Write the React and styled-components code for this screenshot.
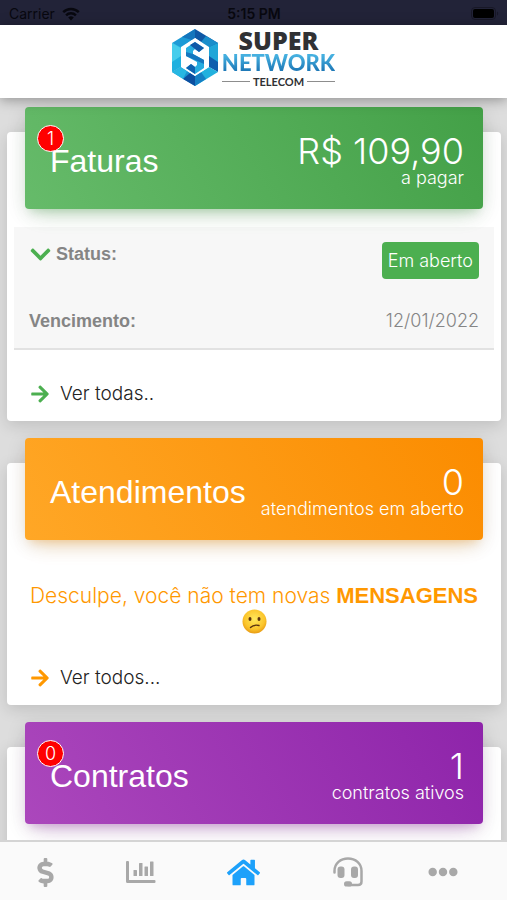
import React from 'react'
import styled, { createGlobalStyle } from 'styled-components'
import { FaArrowRight, FaChevronDown, FaDollarSign, FaEllipsisH, FaHome } from 'react-icons/fa'

const themes = {
  green: { main: '#4caf50', from: '#66bb6a', to: '#43a047', glow: '76, 175, 80' },
  orange: { main: '#ff9800', from: '#ffa726', to: '#fb8c00', glow: '255, 152, 0' },
  purple: { main: '#9c27b0', from: '#ab47bc', to: '#8e24aa', glow: '156, 39, 176' },
}

const GlobalStyle = createGlobalStyle`
  * {
    box-sizing: border-box;
  }

  body {
    margin: 0;
    background: #dddddd;
    color: #222222;
    font-family: 'Liberation Sans', Arial, sans-serif;
    font-size: 18px;
  }
`

const Screen = styled.div`
  display: flex;
  flex-direction: column;
  height: 100vh;
`

const StatusBar = styled.div`
  display: grid;
  grid-template-columns: 1fr auto 1fr;
  align-items: center;
  flex: none;
  height: 25px;
  padding: 2px 8px 0 9px;
  background: #222338;
  color: #08080f;
  font-family: Inter, sans-serif;
  font-size: 14px;
`

const Carrier = styled.span`
  display: flex;
  align-items: center;
  gap: 7px;
`

const Clock = styled.span`
  font-weight: 600;
`

const Battery = styled.svg`
  justify-self: end;
`

const Header = styled.header`
  position: relative;
  z-index: 1;
  display: flex;
  justify-content: center;
  flex: none;
  height: 73px;
  padding-top: 4px;
  background: #ffffff;
  box-shadow: 0 2px 12px rgba(0, 0, 0, 0.35);
`

const Logo = styled.a`
  display: flex;
  gap: 4px;
  text-decoration: none;
`

const LogoWords = styled.span`
  display: flex;
  flex-direction: column;
  align-items: center;
  color: #303134;
  font-family: Lato, sans-serif;
  font-weight: 900;
`

const Super = styled.span`
  font-family: 'Open Sans', sans-serif;
  font-size: 25px;
  font-weight: 800;
  line-height: 22px;
`

const Network = styled.span`
  background: linear-gradient(#45b0e0 20%, #1f7ab8 80%);
  background-clip: text;
  color: transparent;
  font-size: 22px;
  line-height: 24px;
`

const Telecom = styled.span`
  display: flex;
  align-items: center;
  gap: 3px;
  width: 100%;
  font-size: 11px;
  font-weight: 700;
  line-height: 13px;

  &::before,
  &::after {
    content: '';
    flex: 1;
    height: 1px;
    background: #8d8d8d;
  }
`

const Main = styled.main`
  display: flex;
  flex: 1;
  flex-direction: column;
  gap: 42px;
  min-height: 0;
  padding: 34px 6px 40px 7px;
  overflow-y: auto;
  scrollbar-width: none;
`

const Card = styled.section`
  flex: none;
  border-radius: 4px;
  background: #ffffff;
  box-shadow: 0 4px 16px rgba(0, 0, 0, 0.14);
`

const Banner = styled.div`
  position: relative;
  display: flex;
  align-items: center;
  justify-content: space-between;
  height: 102px;
  margin: -25px 18px 0;
  padding: 3px 19px 0 25px;
  border-radius: 4px;
  background: linear-gradient(60deg, ${p => p.$theme.from}, ${p => p.$theme.to});
  box-shadow: 0 12px 20px -10px rgba(${p => p.$theme.glow}, 0.3),
    0 4px 20px rgba(0, 0, 0, 0.12), 0 7px 8px -5px rgba(${p => p.$theme.glow}, 0.2);
  color: #ffffff;
`

const Title = styled.h2`
  margin: 3px 0 0;
  font-size: 32px;
  font-weight: 400;
  line-height: 36px;
`

const Badge = styled.span`
  position: absolute;
  top: 18px;
  left: 12px;
  display: flex;
  align-items: center;
  justify-content: center;
  width: 27px;
  height: 27px;
  border: 1px solid #ffffff;
  border-radius: 50%;
  background: #ff0000;
  font-family: Inter, sans-serif;
  font-size: 18px;
  font-weight: 300;
`

const Summary = styled.div`
  display: flex;
  flex-direction: column;
  align-items: flex-end;
  font-family: Inter, sans-serif;
  font-weight: 300;
`

const Amount = styled.span`
  font-size: 36px;
  line-height: 36px;
`

const Caption = styled.span`
  font-size: 18px;
  line-height: 18px;
`

const Details = styled.dl`
  display: flex;
  flex-direction: column;
  gap: 24px;
  margin: 18px 7px 0;
  padding: 15px 15px 9px;
  border-bottom: 2px solid #e2e2e2;
  background: #f7f7f7;
`

const Row = styled.div`
  display: flex;
  align-items: flex-start;
  justify-content: space-between;
  color: #858585;
  line-height: 36px;
`

const Label = styled.dt`
  display: flex;
  align-items: center;
  gap: 4px;
  font-weight: 700;
  line-height: ${p => (p.$compact ? 24 : 36)}px;
`

const Value = styled.dd`
  margin: 0;
  font-family: Inter, sans-serif;
  font-weight: 300;
`

const Tag = styled.span`
  display: block;
  padding: 0 6px;
  border-radius: 4px;
  background: #4caf50;
  color: #ffffff;
  line-height: 37px;
`

const Message = styled.p`
  margin: 43px 0 0;
  color: #ff9800;
  font-family: Inter, sans-serif;
  font-size: 21px;
  font-weight: 300;
  line-height: 26px;
  text-align: center;
`

const Strong = styled.strong`
  font-family: 'Liberation Sans', Arial, sans-serif;
  font-size: 22px;
  font-weight: 700;
`

const Face = styled.svg`
  display: block;
  margin: 0 auto;
`

const More = styled.a`
  display: flex;
  align-items: center;
  gap: 10px;
  height: 71px;
  padding: 16px 23px 0;
  color: #222222;
  font-family: Inter, sans-serif;
  font-size: 19px;
  font-weight: 300;
  text-decoration: none;

  svg {
    color: ${p => p.$theme.main};
  }
`

const TabBar = styled.nav`
  position: relative;
  display: grid;
  grid-template-columns: 91fr 99fr 107fr 101fr 89fr;
  flex: none;
  height: 60px;
  padding-right: 20px;
  border-top: 2px solid #d4d4d4;
  background: #fafafa;
`

const Tab = styled.button`
  display: flex;
  align-items: center;
  justify-content: center;
  padding: 2px 0 0;
  border: 0;
  background: none;
  color: ${p => (p.$active ? '#1da1fa' : '#a8a8a8')};
`

const WifiIcon = () => (
  <svg width="18" height="14" viewBox="0 0 18 14" fill="none" stroke="currentColor" aria-hidden="true">
    <path d="M1.2 5.2a11 11 0 0 1 15.6 0" strokeWidth="2.4" />
    <path d="M4.1 8.3a7 7 0 0 1 9.8 0" strokeWidth="2.4" />
    <path d="M9 13.4 6.2 10.6a4 4 0 0 1 5.6 0z" fill="currentColor" stroke="none" />
  </svg>
)

const BatteryIcon = () => (
  <Battery width="28" height="13" viewBox="0 0 28 13" aria-hidden="true">
    <rect x="0.5" y="0.5" width="24" height="12" rx="3.5" fill="none" stroke="#181827" />
    <rect x="2" y="2" width="21" height="9" rx="2" fill="#000000" />
    <path d="M26 4.5c1.6.6 1.6 3.4 0 4z" fill="#181827" />
  </Battery>
)

const LogoMark = () => (
  <svg width="46" height="57" viewBox="0 0 46 57" aria-hidden="true">
    <path d="M23 0 0 14l9 5 14-10z" fill="#1c9ad6" />
    <path d="M23 0 10 8l13 4z" fill="#1475bd" />
    <path d="M23 0 46 14l-9 5-14-10z" fill="#0f57a5" />
    <path d="M34 7 46 14l-9 5-8-6z" fill="#1a8ecb" />
    <path d="M0 14v29l9-5V18z" fill="#1fb0df" />
    <path d="M0 14 9 19v8L0 33z" fill="#45cdec" />
    <path d="M46 14v29l-9-5V18z" fill="#0e5eae" />
    <path d="M46 14 37 18v9l9 6z" fill="#20a6d8" />
    <path d="M0 43 23 57V47L9 38z" fill="#1a93d0" />
    <path d="M0 43 9 38l6 4-4 8z" fill="#27b7e2" />
    <path d="M11 50l12 7V47l-5-3z" fill="#0c4fa0" />
    <path d="M46 43 23 57V47l14-9z" fill="#22b1de" />
    <path d="M34 50 23 57V47l6-4z" fill="#1580c4" />
    <path d="M23 9 37 18v20L23 47 9 38V18z" fill="#ffffff" />
    <path d="M23 13 32 19 27 23 23 20 21 22v3l11 6v8l-9 6-9-6 5-4 4 3 2-2v-3l-11-6v-8z" fill="#27ade0" />
    <path d="M23 13 32 19 27 23 23 20 18 16z" fill="#1059a8" />
    <path d="M14 27v-4l7 2 11 6v4z" fill="#1577bf" />
    <path d="M14 39l5-4 4 3v7z" fill="#0f62b0" />
  </svg>
)

const ConfusedFace = () => (
  <Face width="25" height="25" viewBox="0 0 25 25" role="img" aria-label="Rosto confuso">
    <defs>
      <radialGradient id="face" cx="50%" cy="40%" r="60%">
        <stop offset="0" stopColor="#ffe95c" />
        <stop offset="0.7" stopColor="#fbc52c" />
        <stop offset="1" stopColor="#e89b14" />
      </radialGradient>
    </defs>
    <circle cx="12.5" cy="12.5" r="12" fill="url(#face)" />
    <ellipse cx="8" cy="10" rx="1.5" ry="2" fill="#5b3411" />
    <ellipse cx="17" cy="10" rx="1.5" ry="2" fill="#5b3411" />
    <path d="M8.500 18.500c2-2 5-2.800 8.500-2" fill="none" stroke="#5b3411" strokeWidth="1.400" strokeLinecap="round" />
  </Face>
)

const ChartIcon = () => (
  <svg width="30" height="22" viewBox="0 0 30 22" fill="currentColor" aria-hidden="true">
    <path d="M0 1q0-1 1-1h1q1 0 1 1v18h25.500q1 0 1 1v1q0 1-1 1H1.500Q0 22 0 20.500z" />
    <rect x="7.500" y="9" width="3.500" height="6" rx="0.500" />
    <rect x="13" y="2" width="3.500" height="13" rx="0.500" />
    <rect x="18.500" y="5.500" width="3.500" height="9.500" rx="0.500" />
    <rect x="24" y="0.500" width="3.500" height="14.500" rx="0.500" />
  </svg>
)

const HeadsetIcon = () => (
  <svg width="30" height="30" viewBox="0 0 30 30" fill="none" aria-hidden="true">
    <path
      d="M1.500 15.500V14C1.500 6.500 7.500 1.500 15 1.500S28.500 6.500 28.500 14v10.500q0 3.500-3.500 3.500H15"
      stroke="currentColor"
      strokeWidth="2.500"
      strokeLinecap="round"
    />
    <rect x="4.500" y="9.500" width="7" height="11.500" rx="3" fill="currentColor" />
    <rect x="18" y="9.500" width="7" height="11.500" rx="3" fill="currentColor" />
    <rect x="11" y="24.200" width="8" height="5.300" rx="2.600" fill="currentColor" />
  </svg>
)

const InfoCard = ({ theme, title, badge, amount, caption, children }) => (
  <Card>
    <Banner $theme={theme}>
      <Title>{title}</Title>
      {badge !== undefined && <Badge>{badge}</Badge>}
      <Summary>
        <Amount>{amount}</Amount>
        <Caption>{caption}</Caption>
      </Summary>
    </Banner>
    {children}
  </Card>
)

const MoreLink = ({ theme, children }) => (
  <More href="#" $theme={theme}>
    <FaArrowRight size={20} />
    {children}
  </More>
)

const App = () => (
  <Screen>
    <GlobalStyle />
    <StatusBar>
      <Carrier>
        Carrier <WifiIcon />
      </Carrier>
      <Clock>5:15 PM</Clock>
      <BatteryIcon />
    </StatusBar>

    <Header>
      <Logo href="#">
        <LogoMark />
        <LogoWords>
          <Super>SUPER</Super>
          <Network>NETWORK</Network>
          <Telecom>TELECOM</Telecom>
        </LogoWords>
      </Logo>
    </Header>

    <Main>
      <InfoCard theme={themes.green} title="Faturas" badge={1} amount="R$ 109,90" caption="a pagar">
        <Details>
          <Row>
            <Label $compact>
              <FaChevronDown size={23} color={themes.green.main} />
              Status:
            </Label>
            <Value>
              <Tag>Em aberto</Tag>
            </Value>
          </Row>
          <Row>
            <Label>Vencimento:</Label>
            <Value>12/01/2022</Value>
          </Row>
        </Details>
        <MoreLink theme={themes.green}>Ver todas..</MoreLink>
      </InfoCard>

      <InfoCard
        theme={themes.orange}
        title="Atendimentos"
        amount="0"
        caption="atendimentos em aberto"
      >
        <Message>
          Desculpe, você não tem novas <Strong>MENSAGENS</Strong>
          <ConfusedFace />
        </Message>
        <MoreLink theme={themes.orange}>Ver todos...</MoreLink>
      </InfoCard>

      <InfoCard
        theme={themes.purple}
        title="Contratos"
        badge={0}
        amount="1"
        caption="contratos ativos"
      >
        <MoreLink theme={themes.purple}>Ver todos...</MoreLink>
      </InfoCard>
    </Main>

    <TabBar>
      <Tab aria-label="Faturas">
        <FaDollarSign size={29} />
      </Tab>
      <Tab aria-label="Consumo">
        <ChartIcon />
      </Tab>
      <Tab aria-label="Início" $active>
        <FaHome size={33} />
      </Tab>
      <Tab aria-label="Suporte">
        <HeadsetIcon />
      </Tab>
      <Tab aria-label="Mais">
        <FaEllipsisH size={30} />
      </Tab>
    </TabBar>
  </Screen>
)

export default App
